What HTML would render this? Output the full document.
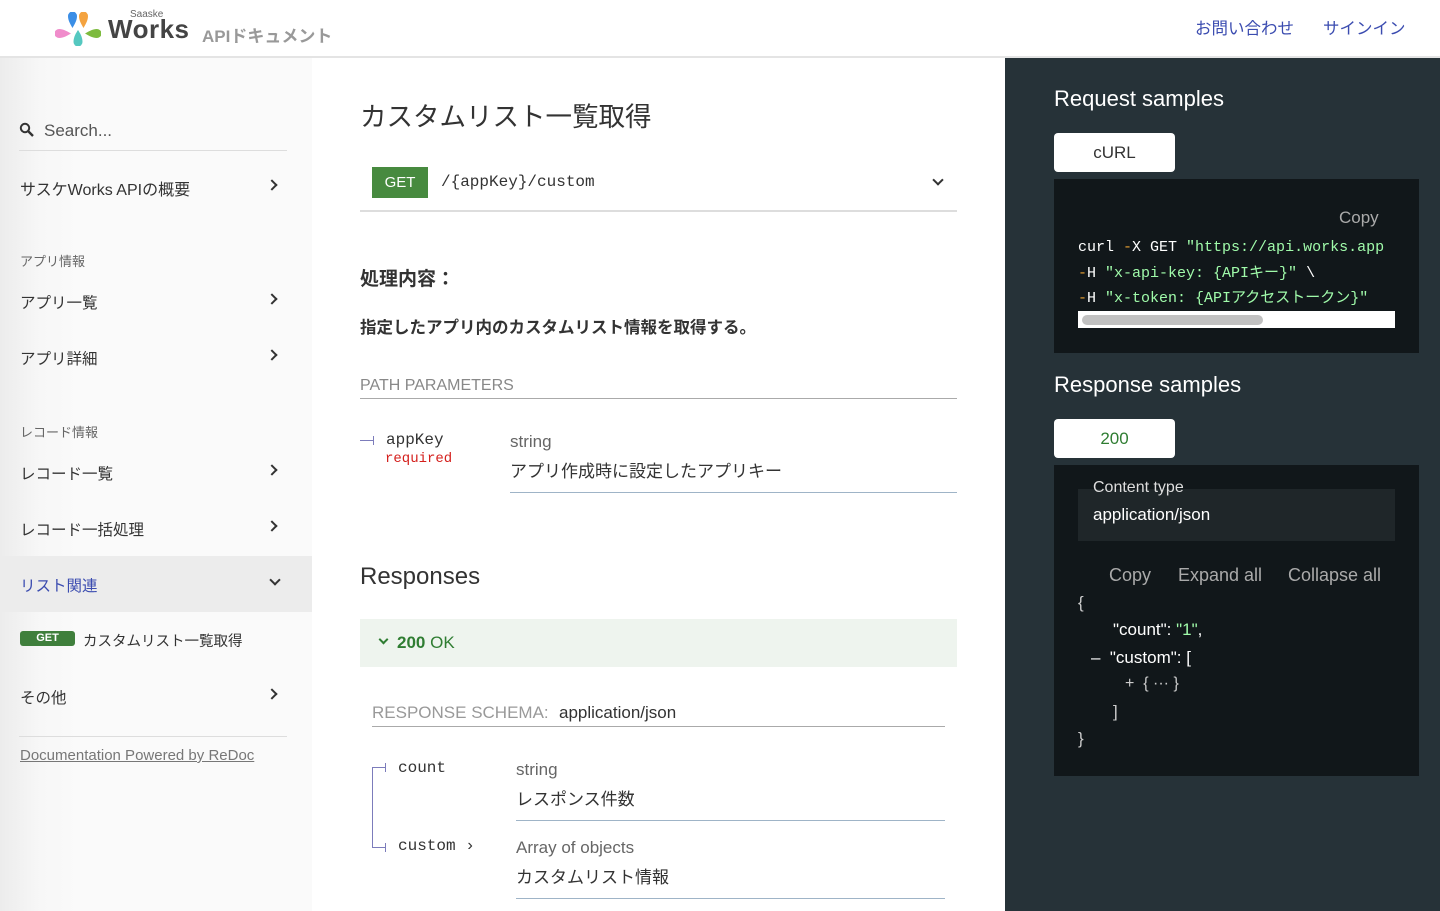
<!DOCTYPE html>
<html><head><meta charset="utf-8">
<style>
*{margin:0;padding:0;box-sizing:border-box}
body{width:1440px;height:911px;overflow:hidden;background:#fff;font-family:"Liberation Sans","Noto Sans CJK JP",sans-serif;color:#333;position:relative}
.a{position:absolute;white-space:nowrap}
.mono{font-family:"Liberation Mono","Noto Sans CJK JP",monospace}
.hdr{left:0;top:0;width:1440px;height:58px;background:#fff;border-bottom:2px solid #e4e4e4;z-index:2}
.side{left:0;top:58px;width:312px;height:853px;background:linear-gradient(90deg,#ececec 0,#f7f7f7 40px,#fafafa 80px)}
.right{left:1005px;top:58px;width:435px;height:853px;background:#263238}
.nav{font-size:15.5px;color:#333}
.chev{width:8px;height:8px;border-right:2px solid #333;border-bottom:2px solid #333;transform:rotate(-45deg)}
.grp{font-size:13px;color:#666}
.code{background:#11171a}
</style></head><body>
<div class="a hdr">
 <svg class="a" style="left:55px;top:12px" width="46" height="34" viewBox="0 0 46 34">
  <path d="M13 4 A4.5 4.5 0 0 1 22 4 C22 9 19 13 17.5 16 C16 13 13 9 13 4Z" fill="#3b8ee6"/>
  <path d="M24 4 A4.5 4.5 0 0 1 33 4 C33 9 30 13 28.5 16 C27 13 24 9 24 4Z" fill="#f4a340"/>
  <path d="M4 17 A4.5 4.5 0 0 0 4 26 C9 26 13 23 16 21.5 C13 20 9 17 4 17Z" fill="#f08ccb"/>
  <path d="M42 17 A4.5 4.5 0 0 1 42 26 C37 26 33 23 30 21.5 C33 20 37 17 42 17Z" fill="#7dbb3e"/>
  <path d="M18.5 30 A4.5 4.5 0 0 0 27.5 30 C27.5 25 25 21 23 18 C21 21 18.5 25 18.5 30Z" fill="#55c8c0"/>
 </svg>
 <div class="a" style="left:130px;top:9px;font-size:10px;color:#666">Saaske</div>
 <div class="a" style="left:108px;top:14px;font-size:26px;font-weight:bold;color:#444;letter-spacing:0.5px">Works</div>
 <div class="a" style="left:202px;top:22px;font-size:17px;font-weight:bold;color:#999">APIドキュメント</div>
 <div class="a" style="left:1195px;top:15px;font-size:16.5px;color:#3b4cb0">お問い合わせ</div>
 <div class="a" style="left:1323px;top:15px;font-size:16.5px;color:#3b4cb0">サインイン</div>
</div>
<div class="a side"></div>
<svg class="a" style="left:19px;top:122px" width="16" height="16" viewBox="0 0 16 16"><circle cx="6" cy="6" r="4.2" fill="none" stroke="#333" stroke-width="2"/><path d="M9 9l5 5" stroke="#333" stroke-width="2.4"/></svg>
<div class="a" style="left:44px;top:121px;font-size:17px;color:#555">Search...</div>
<div class="a" style="left:19px;top:150px;width:268px;height:1px;background:#ddd"></div>
<div class="a nav" style="left:20px;top:176px;font-size:16px">サスケWorks APIの概要</div><div class="a chev" style="left:268px;top:181px"></div>
<div class="a grp" style="left:20px;top:251px">アプリ情報</div>
<div class="a nav" style="left:20px;top:291px">アプリ一覧</div><div class="a chev" style="left:268px;top:295px"></div>
<div class="a nav" style="left:20px;top:347px">アプリ詳細</div><div class="a chev" style="left:268px;top:351px"></div>
<div class="a grp" style="left:20px;top:422px">レコード情報</div>
<div class="a nav" style="left:20px;top:462px">レコード一覧</div><div class="a chev" style="left:268px;top:466px"></div>
<div class="a nav" style="left:20px;top:518px">レコード一括処理</div><div class="a chev" style="left:268px;top:522px"></div>
<div class="a" style="left:0;top:556px;width:312px;height:56px;background:#ececec"></div>
<div class="a nav" style="left:20px;top:574px;color:#3b4cb0">リスト関連</div><div class="a chev" style="left:271px;top:576px;transform:rotate(45deg)"></div>
<div class="a" style="left:20px;top:631px;width:55px;height:15px;background:#3f7f3c;border-radius:3px;color:#fff;font-size:11px;font-weight:bold;text-align:center;line-height:15px">GET</div>
<div class="a nav" style="left:83px;top:630px;font-size:14.5px">カスタムリスト一覧取得</div>
<div class="a nav" style="left:20px;top:686px">その他</div><div class="a chev" style="left:268px;top:690px"></div>
<div class="a" style="left:19px;top:736px;width:268px;height:1px;background:#ddd"></div>
<div class="a" style="left:20px;top:747px;font-size:15px;color:#777;text-decoration:underline">Documentation Powered by ReDoc</div>

<div class="a" style="left:360px;top:95px;font-size:26.5px;color:#333">カスタムリスト一覧取得</div>
<div class="a" style="left:372px;top:167px;width:56px;height:31px;background:#478a3f;color:#fff;font-size:15px;text-align:center;line-height:31px">GET</div>
<div class="a mono" style="left:441px;top:173px;font-size:16px;color:#333">/{appKey}/custom</div>
<div class="a chev" style="left:934px;top:176px;transform:rotate(45deg)"></div>
<div class="a" style="left:360px;top:210px;width:597px;height:2px;background:#ddd"></div>
<div class="a" style="left:360px;top:264px;font-size:19px;font-weight:bold;color:#333">処理内容：</div>
<div class="a" style="left:360px;top:314px;font-size:16.5px;font-weight:bold;color:#333">指定したアプリ内のカスタムリスト情報を取得する。</div>
<div class="a" style="left:360px;top:377px;font-size:16px;color:#888">PATH PARAMETERS</div>
<div class="a" style="left:360px;top:398px;width:597px;height:1px;background:#aaa"></div>
<div class="a" style="left:360px;top:440px;width:14px;height:1px;background:#7c7cbb"></div><div class="a" style="left:373px;top:436px;width:1px;height:9px;background:#7c7cbb"></div>
<div class="a mono" style="left:386px;top:431px;font-size:16px;color:#333">appKey</div>
<div class="a mono" style="left:385px;top:451px;font-size:14px;color:#d41f1c">required</div>
<div class="a" style="left:510px;top:432px;font-size:17px;color:#666">string</div>
<div class="a" style="left:510px;top:457px;font-size:17px;color:#333">アプリ作成時に設定したアプリキー</div>
<div class="a" style="left:510px;top:492px;width:447px;height:1px;background:#9fb4c7"></div>
<div class="a" style="left:360px;top:563px;font-size:24px;color:#333">Responses</div>
<div class="a" style="left:360px;top:619px;width:597px;height:48px;background:#eef4ee"></div>
<div class="a chev" style="left:380px;top:636px;transform:rotate(45deg);border-color:#2f7d32;width:7px;height:7px"></div>
<div class="a" style="left:397px;top:633px;font-size:17px;color:#2f7d32"><b>200</b> OK</div>
<div class="a" style="left:372px;top:703px;font-size:17px;color:#999">RESPONSE SCHEMA:</div>
<div class="a" style="left:559px;top:703px;font-size:17px;color:#333">application/json</div>
<div class="a" style="left:372px;top:726px;width:573px;height:1px;background:#aaa"></div>
<div class="a" style="left:372px;top:767px;width:1px;height:80px;background:#7c7cbb"></div>
<div class="a" style="left:372px;top:767px;width:14px;height:1px;background:#7c7cbb"></div>
<div class="a" style="left:372px;top:847px;width:14px;height:1px;background:#7c7cbb"></div>
<div class="a" style="left:385px;top:763px;width:1px;height:9px;background:#7c7cbb"></div>
<div class="a" style="left:385px;top:843px;width:1px;height:9px;background:#7c7cbb"></div>
<div class="a mono" style="left:398px;top:759px;font-size:16px">count</div>
<div class="a mono" style="left:398px;top:837px;font-size:16px">custom ›</div>
<div class="a" style="left:516px;top:760px;font-size:17px;color:#666">string</div>
<div class="a" style="left:516px;top:785px;font-size:17px;color:#333">レスポンス件数</div>
<div class="a" style="left:516px;top:820px;width:429px;height:1px;background:#9fb4c7"></div>
<div class="a" style="left:516px;top:838px;font-size:17px;color:#666">Array of objects</div>
<div class="a" style="left:516px;top:863px;font-size:17px;color:#333">カスタムリスト情報</div>
<div class="a" style="left:516px;top:898px;width:429px;height:1px;background:#9fb4c7"></div>

<div class="a right"></div>
<div class="a" style="left:1054px;top:86px;font-size:22px;color:#fff">Request samples</div>
<div class="a" style="left:1054px;top:133px;width:121px;height:39px;background:#fff;border-radius:4px;color:#333;font-size:17px;text-align:center;line-height:39px">cURL</div>
<div class="a code" style="left:1054px;top:179px;width:365px;height:174px"></div>
<div class="a" style="left:1339px;top:208px;font-size:17px;color:#aaa">Copy</div>
<div class="a mono" style="left:1078px;top:235px;width:317px;overflow:hidden;font-size:15px;line-height:25.5px;color:#fff">curl <span style="color:#e49e32">-</span>X GET <span style="color:#a0fbaa">"https://api.works.app</span><br><span style="color:#e49e32">-</span>H <span style="color:#a0fbaa">"x-api-key: {APIキー}"</span> \<br><span style="color:#e49e32">-</span>H <span style="color:#a0fbaa">"x-token: {APIアクセストークン}"</span></div>
<div class="a" style="left:1078px;top:311px;width:317px;height:17px;background:#fff"></div>
<div class="a" style="left:1082px;top:315px;width:181px;height:10px;background:#c1c1c1;border-radius:5px"></div>
<div class="a" style="left:1054px;top:372px;font-size:22px;color:#fff">Response samples</div>
<div class="a" style="left:1054px;top:419px;width:121px;height:39px;background:#fff;border-radius:4px;color:#2f7d32;font-size:17px;text-align:center;line-height:39px">200</div>
<div class="a code" style="left:1054px;top:465px;width:365px;height:311px"></div>
<div class="a" style="left:1078px;top:489px;width:317px;height:52px;background:#1f2629"></div>
<div class="a" style="left:1093px;top:479px;font-size:16px;color:#ddd">Content type</div>
<div class="a" style="left:1093px;top:505px;font-size:17px;color:#fff">application/json</div>
<div class="a" style="left:1109px;top:565px;font-size:18px;color:#aaa">Copy</div>
<div class="a" style="left:1178px;top:565px;font-size:18px;color:#aaa">Expand all</div>
<div class="a" style="left:1288px;top:565px;font-size:18px;color:#aaa">Collapse all</div>
<div class="a" style="left:1078px;top:593px;font-size:17px;color:#ccc">{</div>
<div class="a" style="left:1113px;top:620px;font-size:17px;color:#fff">"count": <span style="color:#a0fbaa">"1"</span>,</div>
<div class="a" style="left:1091px;top:648px;font-size:17px;color:#fff">–&nbsp;&nbsp;"custom": [</div>
<div class="a" style="left:1125px;top:675px;font-size:16px;color:#ccc">+ &nbsp;{ ··· }</div>
<div class="a" style="left:1113px;top:702px;font-size:17px;color:#ccc">]</div>
<div class="a" style="left:1078px;top:729px;font-size:17px;color:#ccc">}</div>
</body></html>
